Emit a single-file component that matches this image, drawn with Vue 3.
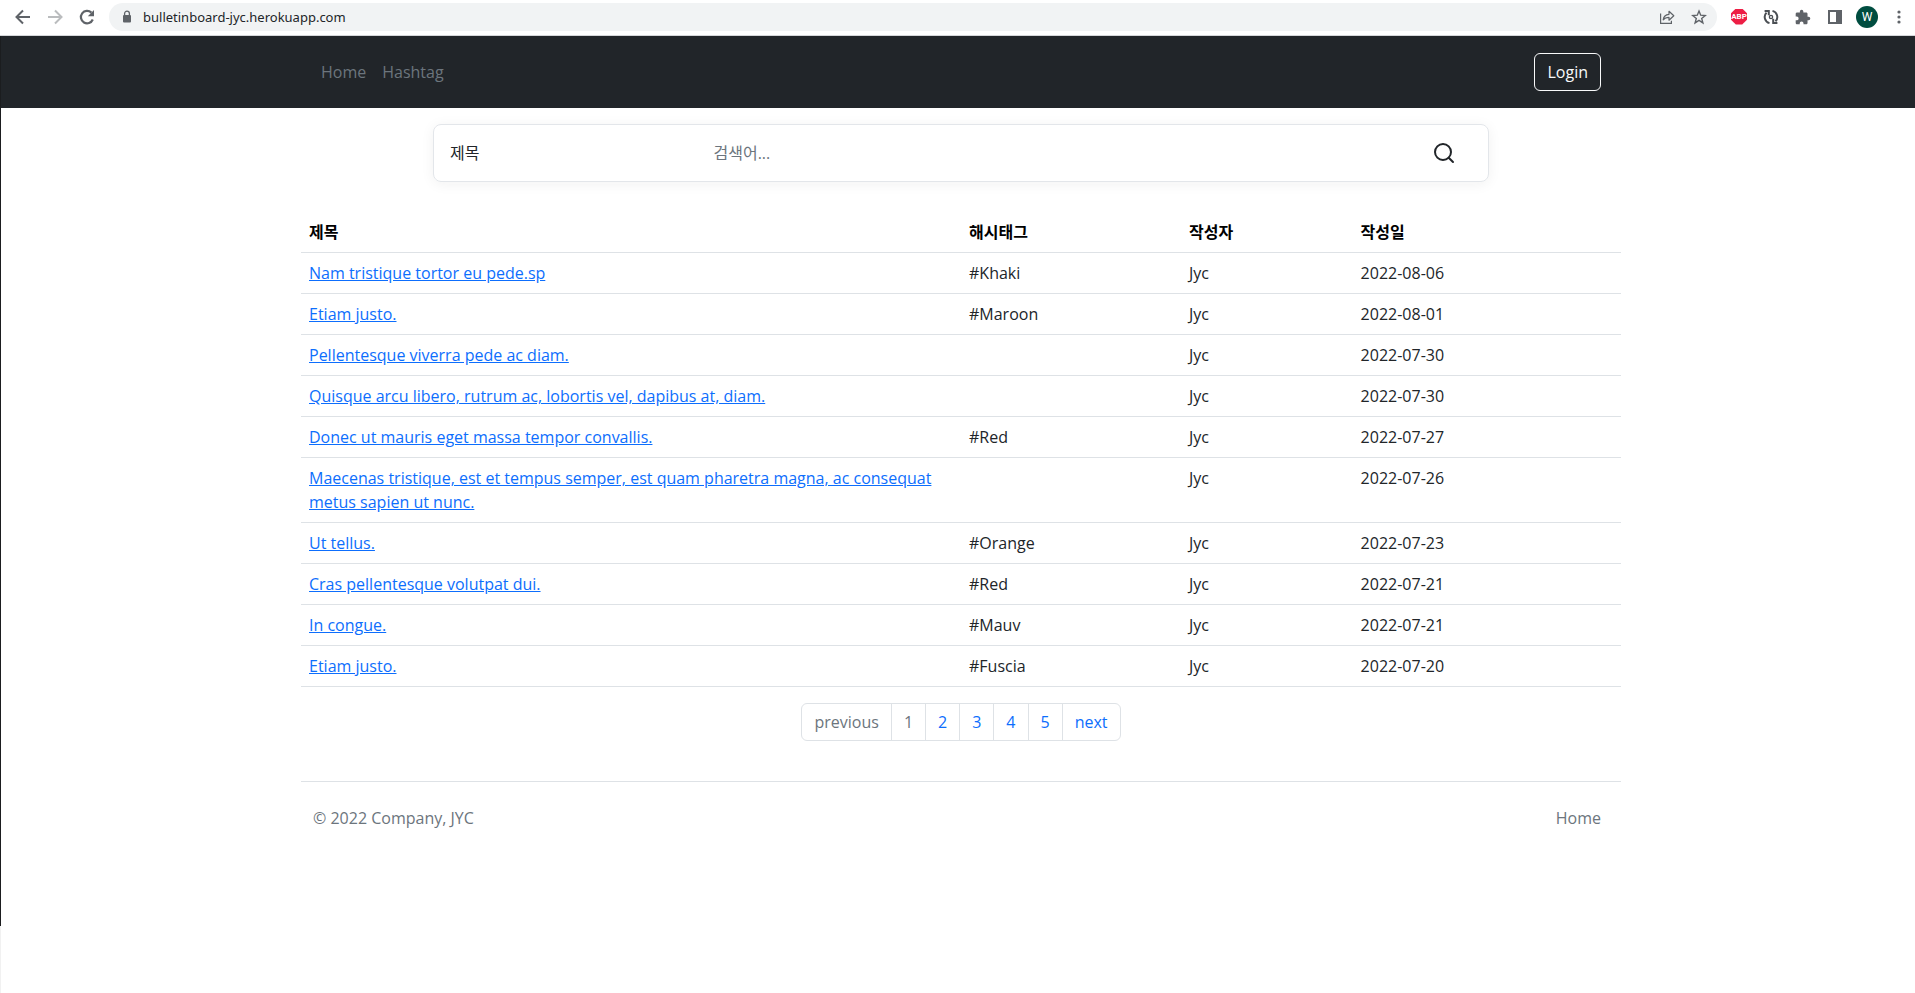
<script setup>
const posts = [
  { title: 'Nam tristique tortor eu pede.sp', tag: '#Khaki', date: '2022-08-06' },
  { title: 'Etiam justo.', tag: '#Maroon', date: '2022-08-01' },
  { title: 'Pellentesque viverra pede ac diam.', tag: '', date: '2022-07-30' },
  { title: 'Quisque arcu libero, rutrum ac, lobortis vel, dapibus at, diam.', tag: '', date: '2022-07-30' },
  { title: 'Donec ut mauris eget massa tempor convallis.', tag: '#Red', date: '2022-07-27' },
  { title: 'Maecenas tristique, est et tempus semper, est quam pharetra magna, ac consequat metus sapien ut nunc.', tag: '', date: '2022-07-26' },
  { title: 'Ut tellus.', tag: '#Orange', date: '2022-07-23' },
  { title: 'Cras pellentesque volutpat dui.', tag: '#Red', date: '2022-07-21' },
  { title: 'In congue.', tag: '#Mauv', date: '2022-07-21' },
  { title: 'Etiam justo.', tag: '#Fuscia', date: '2022-07-20' },
]
const pages = [
  { label: 'previous', off: true },
  { label: '1', off: true },
  { label: '2' },
  { label: '3' },
  { label: '4' },
  { label: '5' },
  { label: 'next' },
]
</script>

<template>
  <div class="window">
    <div class="toolbar">
      <div class="history">
        <button class="tool" aria-label="Back">
          <svg width="20" height="20" viewBox="0 0 20 20" fill="none" stroke="#5f6368" stroke-width="2"><path d="M17 10H4M10 3.500L3.500 10l6.500 6.500" /></svg>
        </button>
        <button class="tool" aria-label="Forward">
          <svg width="20" height="20" viewBox="0 0 20 20" fill="none" stroke="#babcbe" stroke-width="2"><path d="M3 10h13M10 3.500l6.500 6.500-6.500 6.500" /></svg>
        </button>
        <button class="tool" aria-label="Reload">
          <svg width="20" height="20" viewBox="0 0 20 20"><path d="M15.800 12.500A6.200 6.200 0 1 1 14.400 5.600" fill="none" stroke="#5f6368" stroke-width="2.200" /><path d="M17 3v6.200h-6.200z" fill="#5f6368" /></svg>
        </button>
      </div>
      <div class="omnibox">
        <svg width="10" height="14" viewBox="0 0 10 14"><rect x="1" y="5" width="8" height="7.500" rx="1" fill="#5f6368" /><path d="M2.600 5V3.600a2.400 2.400 0 0 1 4.800 0V5" fill="none" stroke="#5f6368" stroke-width="1.300" /></svg>
        <input class="address" aria-label="Address" value="bulletinboard-jyc.herokuapp.com" />
        <button class="tool" aria-label="Share">
          <svg width="16" height="16" viewBox="0 0 16 16" fill="none" stroke="#5f6368" stroke-width="1.200"><path d="M1.600 4.500v9.900h10.800v-2.600" /><path d="M4.200 10.800c.4-3.600 2.400-5.300 5.800-5.500V2.300l4.800 4.500L10 11.200V8.300c-2.600 0-4.400.7-5.800 2.500z" stroke-linejoin="round" /></svg>
        </button>
        <button class="tool" aria-label="Bookmark">
          <svg width="16" height="16" viewBox="0 0 16 16" fill="none" stroke="#5f6368" stroke-width="1.400"><path d="M8 2l1.700 4.200 4.500.3-3.500 2.900 1.200 4.500L8 11.400l-3.900 2.500 1.200-4.500-3.500-2.900 4.500-.3z" /></svg>
        </button>
      </div>
      <div class="extensions">
        <button class="tool" aria-label="ABP"><span class="abp">ABP</span></button>
        <button class="tool" aria-label="Sync extension">
          <svg width="16" height="16" viewBox="0 0 16 16" fill="none" stroke="#4b4f54" stroke-width="2"><path d="M9.500 1.900a6.300 6.300 0 0 1 3 10.500M6.500 14.100A6.300 6.300 0 0 1 3.500 3.600" /><path d="M1.600 2h4.200v4.200M14.400 14h-4.200V9.800" /><circle cx="8" cy="8" r="1.600" stroke-width="1.400" /></svg>
        </button>
        <button class="tool" aria-label="Extensions">
          <svg width="16" height="16" viewBox="1 0 23 23"><path fill="#5f6368" d="M20.500 11H19V7c0-1.100-.9-2-2-2h-4V3.500a2.500 2.500 0 0 0-5 0V5H4c-1.100 0-2 .9-2 2v3.800h1.500a2.700 2.700 0 0 1 0 5.400H2V20c0 1.100.9 2 2 2h3.800v-1.500a2.700 2.700 0 0 1 5.400 0V22H17c1.100 0 2-.9 2-2v-4h1.500a2.500 2.500 0 0 0 0-5z" /></svg>
        </button>
        <button class="tool" aria-label="Side panel">
          <svg width="16" height="16" viewBox="0 0 16 16"><path fill="#5f6368" fill-rule="evenodd" d="M1 1h14v14H1zM3 3v10h6V3z" /></svg>
        </button>
        <button class="tool" aria-label="Profile"><span class="avatar">W</span></button>
        <button class="tool" aria-label="Menu">
          <svg width="4" height="16" viewBox="0 0 4 16" fill="#5f6368"><circle cx="2" cy="3" r="1.600" /><circle cx="2" cy="8" r="1.600" /><circle cx="2" cy="13" r="1.600" /></svg>
        </button>
      </div>
    </div>

    <div class="viewport">
      <div class="edge"><i class="edge-dark"></i></div>
      <div class="page">
        <header class="band site-header">
          <div class="container bar">
            <nav class="links">
              <a href="#">Home</a>
              <a href="#">Hashtag</a>
            </nav>
            <button class="login">Login</button>
          </div>
        </header>

        <main class="band">
          <div class="container">
            <form class="search" @submit.prevent>
              <select aria-label="검색 유형"><option>제목</option></select>
              <input type="text" aria-label="검색어" placeholder="검색어..." />
              <button class="go" aria-label="검색">
                <svg width="24" height="24" viewBox="0 0 24 24" fill="none" stroke="#212529" stroke-width="2" stroke-linecap="round"><circle cx="11" cy="11" r="8" /><path d="M21 21l-4.300-4.300" /></svg>
              </button>
            </form>

            <table>
              <colgroup><col class="c-title" /><col class="c-tag" /><col class="c-user" /><col /></colgroup>
              <thead>
                <tr><th>제목</th><th>해시태그</th><th>작성자</th><th>작성일</th></tr>
              </thead>
              <tbody>
                <tr v-for="(p, i) in posts" :key="i">
                  <td><a href="#">{{ p.title }}</a></td>
                  <td>{{ p.tag }}</td>
                  <td>Jyc</td>
                  <td>{{ p.date }}</td>
                </tr>
              </tbody>
            </table>

            <nav class="pagination" aria-label="Pagination">
              <a v-for="p in pages" :key="p.label" href="#" :class="{ off: p.off }">{{ p.label }}</a>
            </nav>
          </div>
        </main>

        <footer class="band">
          <div class="container site-footer">
            <span>© 2022 Company, JYC</span>
            <a href="#">Home</a>
          </div>
        </footer>
      </div>
    </div>
  </div>
</template>

<style>
body {
  margin: 0;
  background: #fff;
}
</style>

<style scoped>
* {
  box-sizing: border-box;
}
.window {
  display: flex;
  flex-direction: column;
  min-height: 100vh;
  color: #212529;
  font: 16px/24px "Open Sans", "Noto Sans CJK KR", sans-serif;
}
button,
input,
select {
  font: inherit;
  color: inherit;
  background: none;
  border: 0;
  padding: 0;
  margin: 0;
  outline: 0;
}
.toolbar {
  display: flex;
  align-items: center;
  height: 36px;
  padding: 0 0 2px 7px;
  border-bottom: 1px solid #d5d7da;
}
.history,
.extensions {
  display: flex;
  align-items: center;
}
.tool {
  display: flex;
  align-items: center;
  justify-content: center;
  width: 32px;
}
.omnibox {
  flex: 1;
  display: flex;
  align-items: center;
  height: 28px;
  margin: 0 6px;
  padding: 0 2px 0 13px;
  border-radius: 14px;
  background: #f1f3f4;
}
.address {
  flex: 1;
  padding-left: 11px;
  font-family: "Noto Sans", sans-serif;
  font-size: 13px;
  line-height: 20px;
}
.abp {
  width: 16px;
  height: 16px;
  background: #ed1e45;
  clip-path: polygon(30% 0, 70% 0, 100% 30%, 100% 70%, 70% 100%, 30% 100%, 0 70%, 0 30%);
  color: #fff;
  font: bold 8px/16px "Roboto", sans-serif;
  text-align: center;
}
.avatar {
  width: 22px;
  height: 22px;
  border-radius: 50%;
  background: #004d40;
  color: #fff;
  font: 12px/22px "Roboto", sans-serif;
  text-align: center;
}
.viewport {
  flex: 1;
  display: flex;
}
.edge {
  display: flex;
  width: 1px;
  padding-bottom: 67px;
  background: #f1f1f1;
}
.edge-dark {
  width: 1px;
  background: #1b1d1f;
}
.page {
  flex: 1;
}
.band {
  padding-left: 6px;
}
.container {
  width: calc(100% - 24px);
  max-width: 1320px;
  margin: 0 auto;
}
.site-header {
  padding-top: 17px;
  padding-bottom: 17px;
  background: #212529;
}
.bar {
  display: flex;
  align-items: center;
  justify-content: space-between;
  padding: 0 20px;
}
.links {
  display: flex;
  gap: 16px;
}
.links a {
  color: #6c757d;
  text-decoration: none;
}
.login {
  height: 38px;
  padding: 0 12px;
  border: 1px solid #f8f9fa;
  border-radius: 6px;
  color: #f8f9fa;
}
main {
  padding-top: 16px;
}
.search {
  display: flex;
  align-items: center;
  width: 80%;
  height: 58px;
  margin: 0 auto 30px;
  padding: 0 32px 0 16px;
  border: 1px solid #e3e6ea;
  border-radius: 8px;
  box-shadow: 0 2px 14px rgba(33, 37, 41, 0.06);
}
.search select {
  width: 25%;
  appearance: none;
}
.search input {
  flex: 1;
  padding-left: 12px;
}
.search input::placeholder {
  color: #6c757d;
  opacity: 1;
}
.go {
  display: flex;
}
table {
  width: 100%;
  table-layout: fixed;
  border-collapse: collapse;
}
.c-title {
  width: 50%;
}
.c-tag {
  width: 16.667%;
}
.c-user {
  width: 13%;
}
th,
td {
  padding: 8px;
  border-bottom: 1px solid #dee2e6;
  text-align: left;
  vertical-align: top;
}
th {
  color: #000;
  font-weight: bold;
}
td a {
  color: #0d6efd;
}
.pagination {
  display: flex;
  width: fit-content;
  margin: 16px auto 40px;
  border: 1px solid #dee2e6;
  border-radius: 6px;
}
.pagination a {
  padding: 6px 12px;
  color: #0d6efd;
  text-decoration: none;
}
.pagination a + a {
  border-left: 1px solid #dee2e6;
}
.pagination a.off {
  color: #6c757d;
}
.site-footer {
  display: flex;
  justify-content: space-between;
  padding: 24px 20px 24px 12px;
  border-top: 1px solid #dee2e6;
  color: #6c757d;
}
.site-footer a {
  color: inherit;
  text-decoration: none;
}
</style>
